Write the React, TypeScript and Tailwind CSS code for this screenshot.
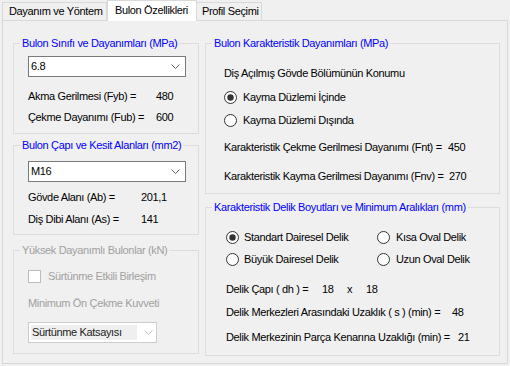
import React from "react";

function Chevron({ color }: { color: string }) {
  return (
    <svg width="9" height="5" viewBox="0 0 9 5" className="block">
      <polyline points="0.5,0.5 4.5,4.5 8.5,0.5" fill="none" stroke={color} strokeWidth="1" />
    </svg>
  );
}

function Radio({ checked }: { checked?: boolean }) {
  return (
    <svg width="13" height="13" viewBox="0 0 13 13" className="block shrink-0">
      <circle cx="6.5" cy="6.5" r="6" fill="#ffffff" stroke="#333333" strokeWidth="1" />
      {checked && <circle cx="6.5" cy="6.5" r="3.2" fill="#333333" />}
    </svg>
  );
}

function Group({
  title,
  disabled,
  className,
  children,
}: {
  title: string;
  disabled?: boolean;
  className: string;
  children: React.ReactNode;
}) {
  return (
    <fieldset className={"border border-[#dcdcdc] " + className}>
      <legend
        className={
          "ml-[6px] px-[2px] leading-[13px] " +
          (disabled ? "text-[#a0a0a0]" : "text-[#0000ff]")
        }
      >
        {title}
      </legend>
      {children}
    </fieldset>
  );
}

function Combo({ value, className }: { value: string; className: string }) {
  return (
    <div
      className={
        "ml-[14px] w-[158px] h-[21px] border border-[#7a7a7a] bg-white flex items-center pl-[2px] pr-[5px] " +
        className
      }
    >
      <span>{value}</span>
      <span className="ml-auto">
        <Chevron color="#606060" />
      </span>
    </div>
  );
}

export default function App() {
  return (
    <div className="w-[510px] h-[366px] bg-[#f0f0f0] text-black font-['Liberation_Sans',Arial,sans-serif] text-[11px] leading-[13px] tracking-[-0.35px] overflow-hidden">
      {/* Tab strip */}
      <div className="h-[21px] pl-[2px] flex items-end">
        <div className="w-[105px] h-[19px] border border-[#d9d9d9] bg-[#f0f0f0] flex items-center pl-[6px] whitespace-nowrap">
          Dayanım ve Yöntem
        </div>
        <div className="relative z-10 w-[90px] h-[21px] border border-b-0 border-[#d9d9d9] bg-white flex items-center pl-[7px] pb-[1px] whitespace-nowrap">
          Bulon Özellikleri
        </div>
        <div className="-ml-[1px] w-[66px] h-[19px] border border-[#d9d9d9] bg-[#f0f0f0] flex items-center pl-[5px] whitespace-nowrap">
          Profil Seçimi
        </div>
      </div>

      {/* Tab page */}
      <div className="-mt-[1px] ml-[2px] w-[506px] h-[344px] border border-[#d9d9d9] bg-[#f0f0f0] pt-[16px] pl-[10px] flex items-start">
        {/* Left column */}
        <div className="w-[186px] flex flex-col">
          <Group title="Bulon Sınıfı ve Dayanımları (MPa)" className="h-[97px]">
            <Combo value="6.8" className="mt-[6px]" />
            <div className="mt-[9px] ml-[14px] h-[21px] flex items-center whitespace-nowrap">
              <span className="w-[128px]">Akma Gerilmesi (Fyb) =</span>
              <span>480</span>
            </div>
            <div className="ml-[14px] h-[21px] flex items-center whitespace-nowrap">
              <span className="w-[128px]">Çekme Dayanımı (Fub) =</span>
              <span>600</span>
            </div>
          </Group>

          <Group title="Bulon Çapı ve Kesit Alanları (mm2)" className="mt-[5px] h-[96px]">
            <Combo value="M16" className="mt-[9px]" />
            <div className="mt-[4px] ml-[14px] h-[22px] flex items-center whitespace-nowrap">
              <span className="w-[113px]">Gövde Alanı (Ab) =</span>
              <span>201,1</span>
            </div>
            <div className="ml-[14px] h-[22px] flex items-center whitespace-nowrap">
              <span className="w-[113px]">Diş Dibi Alanı (As) =</span>
              <span>141</span>
            </div>
          </Group>

          <Group title="Yüksek Dayanımlı Bulonlar (kN)" disabled className="mt-[9px] h-[110px]">
            <div className="mt-[12px] ml-[14px] h-[15px] flex items-center gap-[7px] whitespace-nowrap text-[#a0a0a0]">
              <span className="w-[13px] h-[13px] border border-[#bcbcbc] bg-white shrink-0" />
              <span>Sürtünme Etkili Birleşim</span>
            </div>
            <div className="mt-[12px] ml-[14px] h-[15px] flex items-center whitespace-nowrap text-[#a0a0a0]">
              Minimum Ön Çekme Kuvveti
            </div>
            <div className="mt-[11px] ml-[14px] w-[129px] h-[21px] border border-[#cccccc] bg-white flex items-center pl-[2px] pr-[3px]">
              <span className="w-[106px] h-[15px] bg-[#efefef] text-[#222222] flex items-center pl-[1px] whitespace-nowrap">
                Sürtünme Katsayısı
              </span>
              <span className="ml-auto">
                <Chevron color="#bfbfbf" />
              </span>
            </div>
          </Group>
        </div>

        {/* Right column */}
        <div className="ml-[6px] w-[295px] flex flex-col">
          <Group title="Bulon Karakteristik Dayanımları (MPa)" className="h-[157px]">
            <div className="pl-[18px] flex flex-col whitespace-nowrap">
              <div className="mt-[16px] h-[14px] flex items-center">Diş Açılmış Gövde Bölümünün Konumu</div>
              <div className="mt-[10px] h-[14px] flex items-center gap-[6px]">
                <Radio checked />
                <span>Kayma Düzlemi İçinde</span>
              </div>
              <div className="mt-[9px] h-[14px] flex items-center gap-[6px]">
                <Radio />
                <span>Kayma Düzlemi Dışında</span>
              </div>
              <div className="mt-[13px] h-[14px] flex items-center">
                <span className="w-[224px]">Karakteristik Çekme Gerilmesi Dayanımı (Fnt) =</span>
                <span>450</span>
              </div>
              <div className="mt-[15px] h-[14px] flex items-center">
                <span className="w-[225px]">Karakteristik Kayma Gerilmesi Dayanımı (Fnv) =</span>
                <span>270</span>
              </div>
            </div>
          </Group>

          <Group title="Karakteristik Delik Boyutları ve Minimum Aralıkları (mm)" className="mt-[7px] h-[155px]">
            <div className="pl-[20px] flex flex-col whitespace-nowrap">
              <div className="mt-[16px] h-[14px] flex items-center">
                <div className="w-[151px] flex items-center gap-[5px]">
                  <Radio checked />
                  <span>Standart Dairesel Delik</span>
                </div>
                <div className="flex items-center gap-[6px]">
                  <Radio />
                  <span>Kısa Oval Delik</span>
                </div>
              </div>
              <div className="mt-[8px] h-[14px] flex items-center">
                <div className="w-[151px] flex items-center gap-[5px]">
                  <Radio />
                  <span>Büyük Dairesel Delik</span>
                </div>
                <div className="flex items-center gap-[6px]">
                  <Radio />
                  <span>Uzun Oval Delik</span>
                </div>
              </div>
              <div className="mt-[16px] h-[14px] flex items-center">
                <span className="w-[96px]">Delik Çapı ( dh ) =</span>
                <span className="w-[25px]">18</span>
                <span className="w-[19px]">x</span>
                <span>18</span>
              </div>
              <div className="mt-[9px] h-[14px] flex items-center">
                <span className="w-[226px]">Delik Merkezleri Arasındaki Uzaklık ( s ) (min) =</span>
                <span>48</span>
              </div>
              <div className="mt-[11px] h-[14px] flex items-center">
                <span className="w-[232px]">Delik Merkezinin Parça Kenarına Uzaklığı (min) =</span>
                <span>21</span>
              </div>
            </div>
          </Group>
        </div>
      </div>
    </div>
  );
}
